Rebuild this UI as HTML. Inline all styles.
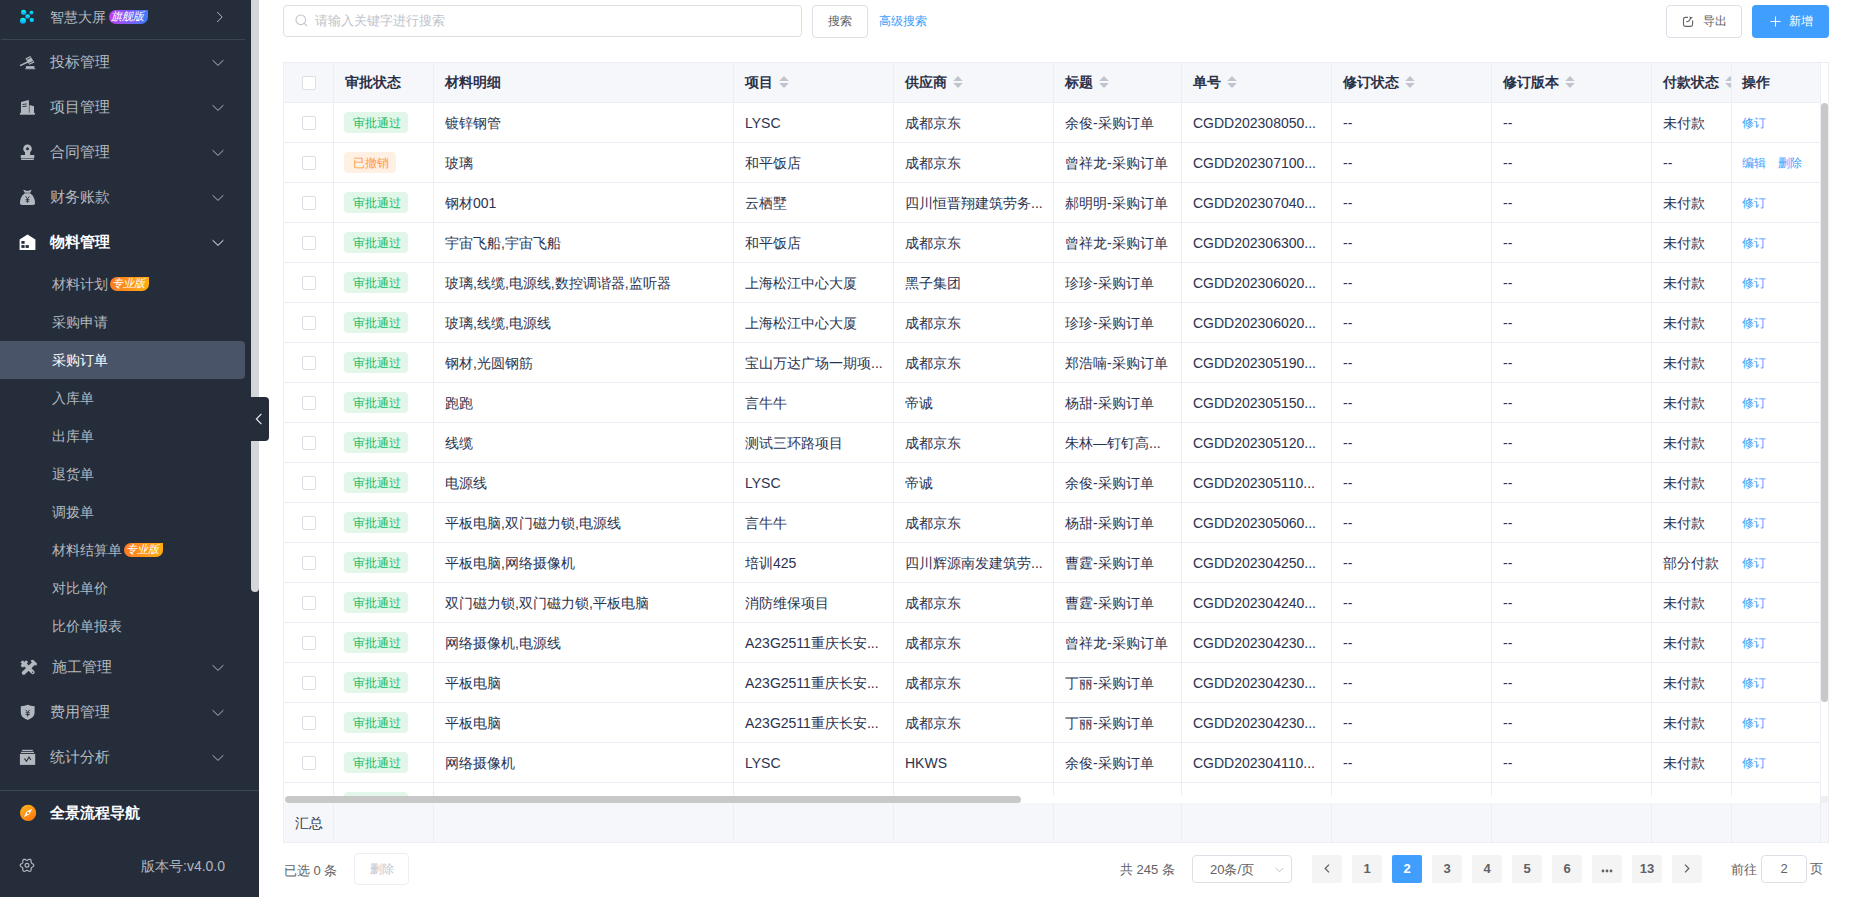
<!DOCTYPE html><html><head><meta charset="utf-8"><style>
*{box-sizing:border-box}
html,body{margin:0;padding:0}
body{width:1854px;height:897px;overflow:hidden;position:relative;background:#fff;font-family:"Liberation Sans",sans-serif;color:#2c3350;}
.abs{position:absolute}
.sb{position:absolute;left:0;top:0;width:259px;height:897px;background:#252d3b}
.thumb{position:absolute;left:251px;top:0;width:8px;height:592px;background:#d5d6d9;border-radius:0 0 4px 4px}
.mi{position:absolute;left:0;width:245px;height:38px;color:#b3b8bf;font-size:15px;line-height:38px;white-space:nowrap}
.mi .ic{position:absolute;left:19px;top:0;height:38px;display:flex;align-items:center}
.mi .tx{position:absolute;left:50px;top:0}
.mi .ar{position:absolute;left:212px;top:0;height:38px;display:flex;align-items:center;color:#b3b8bf}
.si{position:absolute;left:0;width:245px;height:38px;color:#b3b8bf;font-size:14px;line-height:38px;white-space:nowrap}
.si .tx{position:absolute;left:52px;top:0}
.si.sel{background:#4a5469;color:#fff;border-radius:0 4px 4px 0}
.badge{position:absolute;height:14px;font-size:11px;line-height:13px;color:#fff;font-style:italic;text-align:center;text-indent:-2px;letter-spacing:-0.3px;border-radius:7px 0 7px 7px;}
.b-pro{background:linear-gradient(90deg,#ff7a23,#ffae10)}
.b-flag{background:linear-gradient(90deg,#c03df2,#3d7bf7)}
.sep{position:absolute;left:1px;width:244px;height:1px;background:#3b4457}
.toggle{position:absolute;left:251px;top:397px;width:18px;height:44px;background:#252d3b;border-radius:0 4px 4px 0}
/* main */
.inp{position:absolute;left:283px;top:5px;width:519px;height:32px;border:1px solid #dcdfe6;border-radius:4px;background:#fff}
.btn{position:absolute;border:1px solid #dcdfe6;border-radius:4px;background:#fff;font-size:12px;color:#606266;text-align:center}
.tbl{position:absolute;left:283px;top:62px;width:1546px;height:781px;border:1px solid #ebeef5;overflow:hidden}
.cell{position:absolute;overflow:hidden;white-space:nowrap;font-size:14px;padding-left:12px}
.hd{position:absolute;background:#f5f7fa}
.vl{position:absolute;width:1px;background:#ebeef5}
.hl{position:absolute;height:1px;background:#ebeef5}
.cb{position:absolute;width:14px;height:14px;border:1px solid #dcdfe6;border-radius:2px;background:#fff}
.tag{position:absolute;height:21px;line-height:23px;font-size:12px;padding:0 7px 0 9px;border-radius:4px}
.tag.ok{background:#e3f6ea;color:#17bb62}
.tag.cancel{background:#fff0e4;color:#ff9a3f}
.lnk{position:absolute;font-size:12px;color:#409eff}
.caret{position:absolute;width:10px;height:12px}
.pg{position:absolute;top:855px;width:30px;height:28px;background:#f4f4f5;border-radius:2px;font-size:13px;font-weight:bold;color:#606266;text-align:center;line-height:28px}
.pg.on{background:#409eff;color:#fff}
</style></head><body>
<div class="sb">
<div class="mi" style="top:-2px"><span class="tx" style="font-size:14px">智慧大屏</span><span class="ar" style="left:214px"><svg style="margin-left:2px;margin-top:-1px" width="8" height="12" viewBox="0 0 8 12"><path d="M1.2 1 L6.2 6 L1.2 11" stroke="currentColor" stroke-width="1" fill="none"/></svg></span></div>
<div class="badge b-flag" style="left:109px;top:10px;width:39px">旗舰版</div>
<div class="sep" style="top:39px"></div>
<div class="mi" style="top:43px"><span class="tx">投标管理</span><span class="ar"><svg style="margin-top:2px" width="12" height="8" viewBox="0 0 12 8"><path d="M0.6 1.2 L6 6.4 L11.4 1.2" stroke="currentColor" stroke-width="1" fill="none"/></svg></span></div>
<div class="mi" style="top:88px"><span class="tx">项目管理</span><span class="ar"><svg style="margin-top:2px" width="12" height="8" viewBox="0 0 12 8"><path d="M0.6 1.2 L6 6.4 L11.4 1.2" stroke="currentColor" stroke-width="1" fill="none"/></svg></span></div>
<div class="mi" style="top:133px"><span class="tx">合同管理</span><span class="ar"><svg style="margin-top:2px" width="12" height="8" viewBox="0 0 12 8"><path d="M0.6 1.2 L6 6.4 L11.4 1.2" stroke="currentColor" stroke-width="1" fill="none"/></svg></span></div>
<div class="mi" style="top:178px"><span class="tx">财务账款</span><span class="ar"><svg style="margin-top:2px" width="12" height="8" viewBox="0 0 12 8"><path d="M0.6 1.2 L6 6.4 L11.4 1.2" stroke="currentColor" stroke-width="1" fill="none"/></svg></span></div>
<div class="mi" style="top:223px;color:#fff;font-weight:bold"><span class="tx">物料管理</span><span class="ar" style="color:#fff"><svg style="margin-top:2px" width="12" height="8" viewBox="0 0 12 8"><path d="M0.6 1.2 L6 6.4 L11.4 1.2" stroke="currentColor" stroke-width="1" fill="none"/></svg></span></div>
<div class="si" style="top:265px"><span class="tx">材料计划</span></div>
<div class="si" style="top:303px"><span class="tx">采购申请</span></div>
<div class="si sel" style="top:341px"><span class="tx">采购订单</span></div>
<div class="si" style="top:379px"><span class="tx">入库单</span></div>
<div class="si" style="top:417px"><span class="tx">出库单</span></div>
<div class="si" style="top:455px"><span class="tx">退货单</span></div>
<div class="si" style="top:493px"><span class="tx">调拨单</span></div>
<div class="si" style="top:531px"><span class="tx">材料结算单</span></div>
<div class="si" style="top:569px"><span class="tx">对比单价</span></div>
<div class="si" style="top:607px"><span class="tx">比价单报表</span></div>
<div class="badge b-pro" style="left:110px;top:277px;width:39px">专业版</div>
<div class="badge b-pro" style="left:124px;top:543px;width:39px">专业版</div>
<div class="mi" style="top:648px"><span class="tx" style="left:52px">施工管理</span><span class="ar"><svg style="margin-top:2px" width="12" height="8" viewBox="0 0 12 8"><path d="M0.6 1.2 L6 6.4 L11.4 1.2" stroke="currentColor" stroke-width="1" fill="none"/></svg></span></div>
<div class="mi" style="top:693px"><span class="tx" style="left:50px">费用管理</span><span class="ar"><svg style="margin-top:2px" width="12" height="8" viewBox="0 0 12 8"><path d="M0.6 1.2 L6 6.4 L11.4 1.2" stroke="currentColor" stroke-width="1" fill="none"/></svg></span></div>
<div class="mi" style="top:738px"><span class="tx" style="left:50px">统计分析</span><span class="ar"><svg style="margin-top:2px" width="12" height="8" viewBox="0 0 12 8"><path d="M0.6 1.2 L6 6.4 L11.4 1.2" stroke="currentColor" stroke-width="1" fill="none"/></svg></span></div>
<div class="sep" style="top:790px;left:0;width:259px"></div>
<div class="mi" style="top:794px;color:#fff;font-weight:bold"><span class="tx">全景流程导航</span></div>
<div class="abs" style="left:141px;top:857px;font-size:14px;color:#b3b8bf;line-height:18px">版本号:v4.0.0</div>
<svg class="abs" style="left:18px;top:4px" width="20" height="20" viewBox="0 0 20 20"><defs><linearGradient id="gs" x1="0" y1="0" x2="0" y2="1"><stop offset="0.2" stop-color="#05eef0"/><stop offset="1" stop-color="#0898ff"/></linearGradient></defs><g fill="url(#gs)"><circle cx="5.6" cy="8.3" r="2.6"/><circle cx="13.4" cy="8.7" r="1.9"/><circle cx="9.6" cy="12.5" r="2.3"/><circle cx="5" cy="16.8" r="3"/><circle cx="13.8" cy="16.1" r="2.2"/></g></svg>
<svg class="abs" style="left:18px;top:52px" width="20" height="20" viewBox="0 0 20 20"><g fill="#b3b8bf"><path d="M7.3 6.6 L12.3 4.1 L16.4 10.4 L11.3 12.7 Z"/><path d="M9.6 9.2 L10.6 10.6 L2.3 14.2 L1.6 13.1 Z"/><path d="M8 14.1 H16.4 V16.2 H8 Z"/><path d="M7.3 16.2 H17.2 V17.2 H7.3 Z"/></g><g stroke="#252d3b" stroke-width="0.8"><path d="M8.6 7.6 L12.6 5.6"/><path d="M10.8 11.4 L15 9.4"/></g></svg>
<svg class="abs" style="left:18px;top:98px" width="20" height="20" viewBox="0 0 20 20"><g fill="#b3b8bf"><path d="M3 3.9 L10.9 2.1 V14.9 H3 Z"/><path d="M11.5 7 L16 8.2 V14.9 H11.5 Z"/><rect x="1.9" y="14.8" width="15" height="1.9"/></g><g stroke="#252d3b" stroke-width="0.9"><path d="M4.3 6.5 L8.8 5.9"/><path d="M4.3 8.7 L8.8 8.1"/></g></svg>
<svg class="abs" style="left:18px;top:142px" width="20" height="20" viewBox="0 0 20 20"><g fill="#b3b8bf"><circle cx="9.5" cy="6.8" r="4.3"/><rect x="7" y="9.5" width="5.1" height="4"/><rect x="2.8" y="13" width="13.5" height="3"/><rect x="3.2" y="16.8" width="12.6" height="1.2"/><rect x="3" y="16" width="13" height="0.8" fill="#6e747c"/></g><circle cx="9.5" cy="6.7" r="1.5" fill="#252d3b"/></svg>
<svg class="abs" style="left:18px;top:186px" width="20" height="20" viewBox="0 0 20 20"><g fill="#b3b8bf"><path d="M5.1 3.7 L9.5 5 L13.7 3.7 L12.2 6.8 H6.8 Z"/><path d="M6.9 7.3 H12.1 C15.6 9.6 17.2 13.6 17 17.2 Q16.9 18.9 15.2 18.9 H3.8 Q2.1 18.9 2 17.2 C1.8 13.6 3.4 9.6 6.9 7.3Z"/></g><path d="M7.6 10.3 L9.5 12.8 L11.4 10.3 M9.5 12.8 V16.8 M7.7 13.6 H11.3 M7.7 15.2 H11.3" stroke="#252d3b" stroke-width="0.9" fill="none"/></svg>
<svg class="abs" style="left:18px;top:233px" width="20" height="20" viewBox="0 0 20 20"><path d="M1.6 6.6 L9.5 1.5 L17.4 6.6 V16.9 H1.6 Z" fill="#fff"/><g fill="#252d3b"><rect x="3.4" y="8" width="3.2" height="2.8"/><rect x="3.4" y="12.1" width="3.2" height="2.8"/><rect x="7.6" y="12.1" width="3.2" height="2.8"/></g></svg>
<svg class="abs" style="left:18px;top:656px" width="20" height="20" viewBox="0 0 20 20"><g fill="#b3b8bf"><path d="M2.4 6.6 L4.6 4.2 L6.4 6 L7.6 4.6 C8.6 4.4 9.6 5.2 10 6.2 L8.8 7.6 L16.2 15 Q17.2 16.4 16.2 17.6 Q15 18.8 13.6 17.8 L6.2 10.4 L4.8 11.6 C3.6 11.2 2.8 10.2 2.8 9 L4.2 7.8 Z"/><path d="M12.6 4.2 L15.2 3.8 L19 7.6 L18.4 9.8 L16.8 9 L7 18.2 Q5.6 19.4 4.2 18.2 Q3 16.8 4.4 15.6 L13.8 6.6 Z"/></g><circle cx="14.6" cy="16.3" r="0.7" fill="#252d3b"/></svg>
<svg class="abs" style="left:18px;top:701px" width="20" height="20" viewBox="0 0 20 20"><path d="M9.7 3.8 Q12.6 5.2 16.6 5.2 V11.6 Q16.6 16.8 9.7 19 Q2.8 16.8 2.8 11.6 V5.2 Q6.8 5.2 9.7 3.8Z" fill="#b3b8bf"/><path d="M7.6 8.8 L9.7 11.3 L11.8 8.8 M9.7 11.3 V15.6 M7.6 11.8 H11.8 M7.6 13.6 H11.8" stroke="#252d3b" stroke-width="0.9" fill="none"/></svg>
<svg class="abs" style="left:18px;top:746px" width="20" height="20" viewBox="0 0 20 20"><g fill="#b3b8bf"><rect x="4.1" y="3.8" width="10.7" height="1.2"/><rect x="3" y="5.8" width="13" height="1.2"/><rect x="1.9" y="7.9" width="15.3" height="11"/></g><path d="M6.3 12.5 L8.5 15.2 L11 11 L12.8 14" stroke="#252d3b" stroke-width="1.1" fill="none"/></svg>
<svg class="abs" style="left:18px;top:803px" width="20" height="20" viewBox="0 0 20 20"><defs><linearGradient id="gc" x1="0.2" y1="0" x2="0.8" y2="1"><stop offset="0" stop-color="#ffb21e"/><stop offset="1" stop-color="#ff760a"/></linearGradient></defs><circle cx="10.1" cy="9.9" r="8.1" fill="url(#gc)"/><path d="M5.9 13.9 L8.6 8.4 L14.2 5.7 L11.5 11.3 Z" fill="#fff"/><rect x="9.1" y="8.9" width="2" height="2" fill="#ff8a10"/></svg>
<svg class="abs" style="left:18px;top:855px" width="20" height="20" viewBox="0 0 20 20"><path d="M15.80 10.30 L15.65 10.88 L15.25 11.40 L14.70 11.83 L14.12 12.16 L13.64 12.46 L13.33 12.80 L13.19 13.24 L13.17 13.80 L13.17 14.47 L13.08 15.16 L12.83 15.77 L12.40 16.19 L11.82 16.35 L11.17 16.27 L10.53 16.00 L9.95 15.67 L9.45 15.40 L9.00 15.30 L8.55 15.40 L8.05 15.67 L7.47 16.00 L6.83 16.27 L6.18 16.35 L5.60 16.19 L5.17 15.77 L4.92 15.16 L4.83 14.47 L4.83 13.80 L4.81 13.24 L4.67 12.80 L4.36 12.46 L3.88 12.16 L3.30 11.83 L2.75 11.40 L2.35 10.88 L2.20 10.30 L2.35 9.72 L2.75 9.20 L3.30 8.77 L3.88 8.44 L4.36 8.14 L4.67 7.80 L4.81 7.36 L4.83 6.80 L4.83 6.13 L4.92 5.44 L5.17 4.83 L5.60 4.41 L6.18 4.25 L6.83 4.33 L7.47 4.60 L8.05 4.93 L8.55 5.20 L9.00 5.30 L9.45 5.20 L9.95 4.93 L10.53 4.60 L11.17 4.33 L11.82 4.25 L12.40 4.41 L12.83 4.83 L13.08 5.44 L13.17 6.13 L13.17 6.80 L13.19 7.36 L13.33 7.80 L13.64 8.14 L14.12 8.44 L14.70 8.77 L15.25 9.20 L15.65 9.72 L15.80 10.30Z" fill="none" stroke="#b3b8bf" stroke-width="1.2" stroke-linejoin="round"/><circle cx="9" cy="10.3" r="1.9" fill="none" stroke="#b3b8bf" stroke-width="1.2"/></svg>
</div>
<div class="thumb"></div>
<div class="toggle"><svg class="abs" style="left:4px;top:16px" width="8" height="12" viewBox="0 0 8 12"><path d="M6.4 0.8 L1.4 6 L6.4 11.2" stroke="#e8eaee" stroke-width="1.2" fill="none"/></svg></div>
<div class="inp"><svg class="abs" style="left:11px;top:8px" width="13" height="13" viewBox="0 0 13 13"><circle cx="5.8" cy="5.8" r="4.8" stroke="#c0c4cc" stroke-width="1.1" fill="none"/><path d="M9.3 9.3 L12 12" stroke="#c0c4cc" stroke-width="1.1"/></svg><span class="abs" style="left:31px;top:7px;font-size:13px;line-height:16px;color:#c0c4cc">请输入关键字进行搜索</span></div>
<div class="btn" style="left:812px;top:5px;width:56px;height:33px;line-height:31px">搜索</div>
<div class="abs" style="left:879px;top:13px;font-size:12px;line-height:16px;color:#409eff">高级搜索</div>
<div class="btn" style="left:1666px;top:5px;width:76px;height:33px;line-height:31px"><svg class="abs" style="left:15px;top:9px" width="13" height="13" viewBox="0 0 13 13"><path d="M5.9 2.4 H3.4 Q1.5 2.4 1.5 4.3 V9.5 Q1.5 11.4 3.4 11.4 H8.7 Q10.6 11.4 10.6 9.5 V5.4" stroke="#606266" stroke-width="1.1" fill="none"/><path d="M4.4 6.6 Q7.6 6.6 8.6 2.8" stroke="#606266" stroke-width="1.1" fill="none"/><path d="M7.4 1.4 L10.9 2.5 L8.2 4.4 Z" fill="#606266"/></svg><span class="abs" style="left:36px;top:0">导出</span></div>
<div class="abs" style="left:1752px;top:5px;width:77px;height:33px;background:#409eff;border-radius:4px;color:#fff;font-size:12px;line-height:33px"><svg class="abs" style="left:18px;top:11px" width="11" height="11" viewBox="0 0 11 11"><path d="M5.5 0.5 V10.5 M0.5 5.5 H10.5" stroke="#fff" stroke-width="1.1"/></svg><span class="abs" style="left:37px;top:0">新增</span></div>
<div class="tbl">
<div class="hd" style="left:0;top:0;width:1537px;height:39px"></div>
<div class="hl" style="left:0;top:39px;width:1537px"></div>
<div class="cb" style="left:18px;top:13px"></div>
<div class="cell" style="left:50px;top:0;width:99px;height:39px;line-height:39px;font-size:14px;padding-left:11px"><span style="font-weight:bold;color:#2c3148">审批状态</span></div>
<div class="cell" style="left:150px;top:0;width:299px;height:39px;line-height:39px;font-size:14px;padding-left:11px"><span style="font-weight:bold;color:#2c3148">材料明细</span></div>
<div class="cell" style="left:450px;top:0;width:159px;height:39px;line-height:39px;font-size:14px;padding-left:11px"><span style="font-weight:bold;color:#2c3148">项目</span></div>
<div class="cell" style="left:610px;top:0;width:159px;height:39px;line-height:39px;font-size:14px;padding-left:11px"><span style="font-weight:bold;color:#2c3148">供应商</span></div>
<div class="cell" style="left:770px;top:0;width:127px;height:39px;line-height:39px;font-size:14px;padding-left:11px"><span style="font-weight:bold;color:#2c3148">标题</span></div>
<div class="cell" style="left:898px;top:0;width:149px;height:39px;line-height:39px;font-size:14px;padding-left:11px"><span style="font-weight:bold;color:#2c3148">单号</span></div>
<div class="cell" style="left:1048px;top:0;width:159px;height:39px;line-height:39px;font-size:14px;padding-left:11px"><span style="font-weight:bold;color:#2c3148">修订状态</span></div>
<div class="cell" style="left:1208px;top:0;width:159px;height:39px;line-height:39px;font-size:14px;padding-left:11px"><span style="font-weight:bold;color:#2c3148">修订版本</span></div>
<div class="cell" style="left:1368px;top:0;width:79px;height:39px;line-height:39px;font-size:14px;padding-left:11px"><span style="font-weight:bold;color:#2c3148">付款状态</span></div>
<div class="cell" style="left:1448px;top:0;width:88px;height:39px;line-height:39px;font-size:14px;padding-left:10px"><span style="font-weight:bold;color:#2c3148">操作</span></div>
<div class="caret" style="left:495px;top:13px;overflow:hidden;width:10px"><svg style="display:block" width="10" height="12" viewBox="0 0 10 12"><path d="M5 0 L9.8 5 H0.2 Z" fill="#c0c4cc"/><path d="M5 12 L9.8 7 H0.2 Z" fill="#c0c4cc"/></svg></div>
<div class="caret" style="left:669px;top:13px;overflow:hidden;width:10px"><svg style="display:block" width="10" height="12" viewBox="0 0 10 12"><path d="M5 0 L9.8 5 H0.2 Z" fill="#c0c4cc"/><path d="M5 12 L9.8 7 H0.2 Z" fill="#c0c4cc"/></svg></div>
<div class="caret" style="left:815px;top:13px;overflow:hidden;width:10px"><svg style="display:block" width="10" height="12" viewBox="0 0 10 12"><path d="M5 0 L9.8 5 H0.2 Z" fill="#c0c4cc"/><path d="M5 12 L9.8 7 H0.2 Z" fill="#c0c4cc"/></svg></div>
<div class="caret" style="left:943px;top:13px;overflow:hidden;width:10px"><svg style="display:block" width="10" height="12" viewBox="0 0 10 12"><path d="M5 0 L9.8 5 H0.2 Z" fill="#c0c4cc"/><path d="M5 12 L9.8 7 H0.2 Z" fill="#c0c4cc"/></svg></div>
<div class="caret" style="left:1121px;top:13px;overflow:hidden;width:10px"><svg style="display:block" width="10" height="12" viewBox="0 0 10 12"><path d="M5 0 L9.8 5 H0.2 Z" fill="#c0c4cc"/><path d="M5 12 L9.8 7 H0.2 Z" fill="#c0c4cc"/></svg></div>
<div class="caret" style="left:1281px;top:13px;overflow:hidden;width:10px"><svg style="display:block" width="10" height="12" viewBox="0 0 10 12"><path d="M5 0 L9.8 5 H0.2 Z" fill="#c0c4cc"/><path d="M5 12 L9.8 7 H0.2 Z" fill="#c0c4cc"/></svg></div>
<div class="caret" style="left:1441px;top:13px;overflow:hidden;width:6px"><svg style="display:block" width="10" height="12" viewBox="0 0 10 12"><path d="M5 0 L9.8 5 H0.2 Z" fill="#c0c4cc"/><path d="M5 12 L9.8 7 H0.2 Z" fill="#c0c4cc"/></svg></div>
<div class="cb" style="left:18px;top:53px"></div>
<div class="tag ok" style="left:60px;top:49px">审批通过</div>
<div class="cell" style="left:150px;top:40px;width:299px;height:39px;line-height:41px;padding-left:11px">镀锌钢管</div>
<div class="cell" style="left:450px;top:40px;width:159px;height:39px;line-height:41px;padding-left:11px">LYSC</div>
<div class="cell" style="left:610px;top:40px;width:159px;height:39px;line-height:41px;padding-left:11px">成都京东</div>
<div class="cell" style="left:770px;top:40px;width:127px;height:39px;line-height:41px;padding-left:11px">余俊-采购订单</div>
<div class="cell" style="left:898px;top:40px;width:149px;height:39px;line-height:41px;padding-left:11px">CGDD202308050...</div>
<div class="cell" style="left:1048px;top:40px;width:159px;height:39px;line-height:41px;padding-left:11px">--</div>
<div class="cell" style="left:1208px;top:40px;width:159px;height:39px;line-height:41px;padding-left:11px">--</div>
<div class="cell" style="left:1368px;top:40px;width:79px;height:39px;line-height:41px;padding-left:11px">未付款</div>
<div class="lnk" style="left:1458px;top:52px;line-height:16px">修订</div>
<div class="hl" style="left:0;top:79px;width:1537px"></div>
<div class="cb" style="left:18px;top:93px"></div>
<div class="tag cancel" style="left:60px;top:89px">已撤销</div>
<div class="cell" style="left:150px;top:80px;width:299px;height:39px;line-height:41px;padding-left:11px">玻璃</div>
<div class="cell" style="left:450px;top:80px;width:159px;height:39px;line-height:41px;padding-left:11px">和平饭店</div>
<div class="cell" style="left:610px;top:80px;width:159px;height:39px;line-height:41px;padding-left:11px">成都京东</div>
<div class="cell" style="left:770px;top:80px;width:127px;height:39px;line-height:41px;padding-left:11px">曾祥龙-采购订单</div>
<div class="cell" style="left:898px;top:80px;width:149px;height:39px;line-height:41px;padding-left:11px">CGDD202307100...</div>
<div class="cell" style="left:1048px;top:80px;width:159px;height:39px;line-height:41px;padding-left:11px">--</div>
<div class="cell" style="left:1208px;top:80px;width:159px;height:39px;line-height:41px;padding-left:11px">--</div>
<div class="cell" style="left:1368px;top:80px;width:79px;height:39px;line-height:41px;padding-left:11px">--</div>
<div class="lnk" style="left:1458px;top:92px;line-height:16px">编辑</div>
<div class="lnk" style="left:1494px;top:92px;line-height:16px">删除</div>
<div class="hl" style="left:0;top:119px;width:1537px"></div>
<div class="cb" style="left:18px;top:133px"></div>
<div class="tag ok" style="left:60px;top:129px">审批通过</div>
<div class="cell" style="left:150px;top:120px;width:299px;height:39px;line-height:41px;padding-left:11px">钢材001</div>
<div class="cell" style="left:450px;top:120px;width:159px;height:39px;line-height:41px;padding-left:11px">云栖墅</div>
<div class="cell" style="left:610px;top:120px;width:159px;height:39px;line-height:41px;padding-left:11px">四川恒晋翔建筑劳务...</div>
<div class="cell" style="left:770px;top:120px;width:127px;height:39px;line-height:41px;padding-left:11px">郝明明-采购订单</div>
<div class="cell" style="left:898px;top:120px;width:149px;height:39px;line-height:41px;padding-left:11px">CGDD202307040...</div>
<div class="cell" style="left:1048px;top:120px;width:159px;height:39px;line-height:41px;padding-left:11px">--</div>
<div class="cell" style="left:1208px;top:120px;width:159px;height:39px;line-height:41px;padding-left:11px">--</div>
<div class="cell" style="left:1368px;top:120px;width:79px;height:39px;line-height:41px;padding-left:11px">未付款</div>
<div class="lnk" style="left:1458px;top:132px;line-height:16px">修订</div>
<div class="hl" style="left:0;top:159px;width:1537px"></div>
<div class="cb" style="left:18px;top:173px"></div>
<div class="tag ok" style="left:60px;top:169px">审批通过</div>
<div class="cell" style="left:150px;top:160px;width:299px;height:39px;line-height:41px;padding-left:11px">宇宙飞船,宇宙飞船</div>
<div class="cell" style="left:450px;top:160px;width:159px;height:39px;line-height:41px;padding-left:11px">和平饭店</div>
<div class="cell" style="left:610px;top:160px;width:159px;height:39px;line-height:41px;padding-left:11px">成都京东</div>
<div class="cell" style="left:770px;top:160px;width:127px;height:39px;line-height:41px;padding-left:11px">曾祥龙-采购订单</div>
<div class="cell" style="left:898px;top:160px;width:149px;height:39px;line-height:41px;padding-left:11px">CGDD202306300...</div>
<div class="cell" style="left:1048px;top:160px;width:159px;height:39px;line-height:41px;padding-left:11px">--</div>
<div class="cell" style="left:1208px;top:160px;width:159px;height:39px;line-height:41px;padding-left:11px">--</div>
<div class="cell" style="left:1368px;top:160px;width:79px;height:39px;line-height:41px;padding-left:11px">未付款</div>
<div class="lnk" style="left:1458px;top:172px;line-height:16px">修订</div>
<div class="hl" style="left:0;top:199px;width:1537px"></div>
<div class="cb" style="left:18px;top:213px"></div>
<div class="tag ok" style="left:60px;top:209px">审批通过</div>
<div class="cell" style="left:150px;top:200px;width:299px;height:39px;line-height:41px;padding-left:11px">玻璃,线缆,电源线,数控调谐器,监听器</div>
<div class="cell" style="left:450px;top:200px;width:159px;height:39px;line-height:41px;padding-left:11px">上海松江中心大厦</div>
<div class="cell" style="left:610px;top:200px;width:159px;height:39px;line-height:41px;padding-left:11px">黑子集团</div>
<div class="cell" style="left:770px;top:200px;width:127px;height:39px;line-height:41px;padding-left:11px">珍珍-采购订单</div>
<div class="cell" style="left:898px;top:200px;width:149px;height:39px;line-height:41px;padding-left:11px">CGDD202306020...</div>
<div class="cell" style="left:1048px;top:200px;width:159px;height:39px;line-height:41px;padding-left:11px">--</div>
<div class="cell" style="left:1208px;top:200px;width:159px;height:39px;line-height:41px;padding-left:11px">--</div>
<div class="cell" style="left:1368px;top:200px;width:79px;height:39px;line-height:41px;padding-left:11px">未付款</div>
<div class="lnk" style="left:1458px;top:212px;line-height:16px">修订</div>
<div class="hl" style="left:0;top:239px;width:1537px"></div>
<div class="cb" style="left:18px;top:253px"></div>
<div class="tag ok" style="left:60px;top:249px">审批通过</div>
<div class="cell" style="left:150px;top:240px;width:299px;height:39px;line-height:41px;padding-left:11px">玻璃,线缆,电源线</div>
<div class="cell" style="left:450px;top:240px;width:159px;height:39px;line-height:41px;padding-left:11px">上海松江中心大厦</div>
<div class="cell" style="left:610px;top:240px;width:159px;height:39px;line-height:41px;padding-left:11px">成都京东</div>
<div class="cell" style="left:770px;top:240px;width:127px;height:39px;line-height:41px;padding-left:11px">珍珍-采购订单</div>
<div class="cell" style="left:898px;top:240px;width:149px;height:39px;line-height:41px;padding-left:11px">CGDD202306020...</div>
<div class="cell" style="left:1048px;top:240px;width:159px;height:39px;line-height:41px;padding-left:11px">--</div>
<div class="cell" style="left:1208px;top:240px;width:159px;height:39px;line-height:41px;padding-left:11px">--</div>
<div class="cell" style="left:1368px;top:240px;width:79px;height:39px;line-height:41px;padding-left:11px">未付款</div>
<div class="lnk" style="left:1458px;top:252px;line-height:16px">修订</div>
<div class="hl" style="left:0;top:279px;width:1537px"></div>
<div class="cb" style="left:18px;top:293px"></div>
<div class="tag ok" style="left:60px;top:289px">审批通过</div>
<div class="cell" style="left:150px;top:280px;width:299px;height:39px;line-height:41px;padding-left:11px">钢材,光圆钢筋</div>
<div class="cell" style="left:450px;top:280px;width:159px;height:39px;line-height:41px;padding-left:11px">宝山万达广场一期项...</div>
<div class="cell" style="left:610px;top:280px;width:159px;height:39px;line-height:41px;padding-left:11px">成都京东</div>
<div class="cell" style="left:770px;top:280px;width:127px;height:39px;line-height:41px;padding-left:11px">郑浩喃-采购订单</div>
<div class="cell" style="left:898px;top:280px;width:149px;height:39px;line-height:41px;padding-left:11px">CGDD202305190...</div>
<div class="cell" style="left:1048px;top:280px;width:159px;height:39px;line-height:41px;padding-left:11px">--</div>
<div class="cell" style="left:1208px;top:280px;width:159px;height:39px;line-height:41px;padding-left:11px">--</div>
<div class="cell" style="left:1368px;top:280px;width:79px;height:39px;line-height:41px;padding-left:11px">未付款</div>
<div class="lnk" style="left:1458px;top:292px;line-height:16px">修订</div>
<div class="hl" style="left:0;top:319px;width:1537px"></div>
<div class="cb" style="left:18px;top:333px"></div>
<div class="tag ok" style="left:60px;top:329px">审批通过</div>
<div class="cell" style="left:150px;top:320px;width:299px;height:39px;line-height:41px;padding-left:11px">跑跑</div>
<div class="cell" style="left:450px;top:320px;width:159px;height:39px;line-height:41px;padding-left:11px">言牛牛</div>
<div class="cell" style="left:610px;top:320px;width:159px;height:39px;line-height:41px;padding-left:11px">帝诚</div>
<div class="cell" style="left:770px;top:320px;width:127px;height:39px;line-height:41px;padding-left:11px">杨甜-采购订单</div>
<div class="cell" style="left:898px;top:320px;width:149px;height:39px;line-height:41px;padding-left:11px">CGDD202305150...</div>
<div class="cell" style="left:1048px;top:320px;width:159px;height:39px;line-height:41px;padding-left:11px">--</div>
<div class="cell" style="left:1208px;top:320px;width:159px;height:39px;line-height:41px;padding-left:11px">--</div>
<div class="cell" style="left:1368px;top:320px;width:79px;height:39px;line-height:41px;padding-left:11px">未付款</div>
<div class="lnk" style="left:1458px;top:332px;line-height:16px">修订</div>
<div class="hl" style="left:0;top:359px;width:1537px"></div>
<div class="cb" style="left:18px;top:373px"></div>
<div class="tag ok" style="left:60px;top:369px">审批通过</div>
<div class="cell" style="left:150px;top:360px;width:299px;height:39px;line-height:41px;padding-left:11px">线缆</div>
<div class="cell" style="left:450px;top:360px;width:159px;height:39px;line-height:41px;padding-left:11px">测试三环路项目</div>
<div class="cell" style="left:610px;top:360px;width:159px;height:39px;line-height:41px;padding-left:11px">成都京东</div>
<div class="cell" style="left:770px;top:360px;width:127px;height:39px;line-height:41px;padding-left:11px">朱林—钉钉高...</div>
<div class="cell" style="left:898px;top:360px;width:149px;height:39px;line-height:41px;padding-left:11px">CGDD202305120...</div>
<div class="cell" style="left:1048px;top:360px;width:159px;height:39px;line-height:41px;padding-left:11px">--</div>
<div class="cell" style="left:1208px;top:360px;width:159px;height:39px;line-height:41px;padding-left:11px">--</div>
<div class="cell" style="left:1368px;top:360px;width:79px;height:39px;line-height:41px;padding-left:11px">未付款</div>
<div class="lnk" style="left:1458px;top:372px;line-height:16px">修订</div>
<div class="hl" style="left:0;top:399px;width:1537px"></div>
<div class="cb" style="left:18px;top:413px"></div>
<div class="tag ok" style="left:60px;top:409px">审批通过</div>
<div class="cell" style="left:150px;top:400px;width:299px;height:39px;line-height:41px;padding-left:11px">电源线</div>
<div class="cell" style="left:450px;top:400px;width:159px;height:39px;line-height:41px;padding-left:11px">LYSC</div>
<div class="cell" style="left:610px;top:400px;width:159px;height:39px;line-height:41px;padding-left:11px">帝诚</div>
<div class="cell" style="left:770px;top:400px;width:127px;height:39px;line-height:41px;padding-left:11px">余俊-采购订单</div>
<div class="cell" style="left:898px;top:400px;width:149px;height:39px;line-height:41px;padding-left:11px">CGDD202305110...</div>
<div class="cell" style="left:1048px;top:400px;width:159px;height:39px;line-height:41px;padding-left:11px">--</div>
<div class="cell" style="left:1208px;top:400px;width:159px;height:39px;line-height:41px;padding-left:11px">--</div>
<div class="cell" style="left:1368px;top:400px;width:79px;height:39px;line-height:41px;padding-left:11px">未付款</div>
<div class="lnk" style="left:1458px;top:412px;line-height:16px">修订</div>
<div class="hl" style="left:0;top:439px;width:1537px"></div>
<div class="cb" style="left:18px;top:453px"></div>
<div class="tag ok" style="left:60px;top:449px">审批通过</div>
<div class="cell" style="left:150px;top:440px;width:299px;height:39px;line-height:41px;padding-left:11px">平板电脑,双门磁力锁,电源线</div>
<div class="cell" style="left:450px;top:440px;width:159px;height:39px;line-height:41px;padding-left:11px">言牛牛</div>
<div class="cell" style="left:610px;top:440px;width:159px;height:39px;line-height:41px;padding-left:11px">成都京东</div>
<div class="cell" style="left:770px;top:440px;width:127px;height:39px;line-height:41px;padding-left:11px">杨甜-采购订单</div>
<div class="cell" style="left:898px;top:440px;width:149px;height:39px;line-height:41px;padding-left:11px">CGDD202305060...</div>
<div class="cell" style="left:1048px;top:440px;width:159px;height:39px;line-height:41px;padding-left:11px">--</div>
<div class="cell" style="left:1208px;top:440px;width:159px;height:39px;line-height:41px;padding-left:11px">--</div>
<div class="cell" style="left:1368px;top:440px;width:79px;height:39px;line-height:41px;padding-left:11px">未付款</div>
<div class="lnk" style="left:1458px;top:452px;line-height:16px">修订</div>
<div class="hl" style="left:0;top:479px;width:1537px"></div>
<div class="cb" style="left:18px;top:493px"></div>
<div class="tag ok" style="left:60px;top:489px">审批通过</div>
<div class="cell" style="left:150px;top:480px;width:299px;height:39px;line-height:41px;padding-left:11px">平板电脑,网络摄像机</div>
<div class="cell" style="left:450px;top:480px;width:159px;height:39px;line-height:41px;padding-left:11px">培训425</div>
<div class="cell" style="left:610px;top:480px;width:159px;height:39px;line-height:41px;padding-left:11px">四川辉源南发建筑劳...</div>
<div class="cell" style="left:770px;top:480px;width:127px;height:39px;line-height:41px;padding-left:11px">曹霆-采购订单</div>
<div class="cell" style="left:898px;top:480px;width:149px;height:39px;line-height:41px;padding-left:11px">CGDD202304250...</div>
<div class="cell" style="left:1048px;top:480px;width:159px;height:39px;line-height:41px;padding-left:11px">--</div>
<div class="cell" style="left:1208px;top:480px;width:159px;height:39px;line-height:41px;padding-left:11px">--</div>
<div class="cell" style="left:1368px;top:480px;width:79px;height:39px;line-height:41px;padding-left:11px">部分付款</div>
<div class="lnk" style="left:1458px;top:492px;line-height:16px">修订</div>
<div class="hl" style="left:0;top:519px;width:1537px"></div>
<div class="cb" style="left:18px;top:533px"></div>
<div class="tag ok" style="left:60px;top:529px">审批通过</div>
<div class="cell" style="left:150px;top:520px;width:299px;height:39px;line-height:41px;padding-left:11px">双门磁力锁,双门磁力锁,平板电脑</div>
<div class="cell" style="left:450px;top:520px;width:159px;height:39px;line-height:41px;padding-left:11px">消防维保项目</div>
<div class="cell" style="left:610px;top:520px;width:159px;height:39px;line-height:41px;padding-left:11px">成都京东</div>
<div class="cell" style="left:770px;top:520px;width:127px;height:39px;line-height:41px;padding-left:11px">曹霆-采购订单</div>
<div class="cell" style="left:898px;top:520px;width:149px;height:39px;line-height:41px;padding-left:11px">CGDD202304240...</div>
<div class="cell" style="left:1048px;top:520px;width:159px;height:39px;line-height:41px;padding-left:11px">--</div>
<div class="cell" style="left:1208px;top:520px;width:159px;height:39px;line-height:41px;padding-left:11px">--</div>
<div class="cell" style="left:1368px;top:520px;width:79px;height:39px;line-height:41px;padding-left:11px">未付款</div>
<div class="lnk" style="left:1458px;top:532px;line-height:16px">修订</div>
<div class="hl" style="left:0;top:559px;width:1537px"></div>
<div class="cb" style="left:18px;top:573px"></div>
<div class="tag ok" style="left:60px;top:569px">审批通过</div>
<div class="cell" style="left:150px;top:560px;width:299px;height:39px;line-height:41px;padding-left:11px">网络摄像机,电源线</div>
<div class="cell" style="left:450px;top:560px;width:159px;height:39px;line-height:41px;padding-left:11px">A23G2511重庆长安...</div>
<div class="cell" style="left:610px;top:560px;width:159px;height:39px;line-height:41px;padding-left:11px">成都京东</div>
<div class="cell" style="left:770px;top:560px;width:127px;height:39px;line-height:41px;padding-left:11px">曾祥龙-采购订单</div>
<div class="cell" style="left:898px;top:560px;width:149px;height:39px;line-height:41px;padding-left:11px">CGDD202304230...</div>
<div class="cell" style="left:1048px;top:560px;width:159px;height:39px;line-height:41px;padding-left:11px">--</div>
<div class="cell" style="left:1208px;top:560px;width:159px;height:39px;line-height:41px;padding-left:11px">--</div>
<div class="cell" style="left:1368px;top:560px;width:79px;height:39px;line-height:41px;padding-left:11px">未付款</div>
<div class="lnk" style="left:1458px;top:572px;line-height:16px">修订</div>
<div class="hl" style="left:0;top:599px;width:1537px"></div>
<div class="cb" style="left:18px;top:613px"></div>
<div class="tag ok" style="left:60px;top:609px">审批通过</div>
<div class="cell" style="left:150px;top:600px;width:299px;height:39px;line-height:41px;padding-left:11px">平板电脑</div>
<div class="cell" style="left:450px;top:600px;width:159px;height:39px;line-height:41px;padding-left:11px">A23G2511重庆长安...</div>
<div class="cell" style="left:610px;top:600px;width:159px;height:39px;line-height:41px;padding-left:11px">成都京东</div>
<div class="cell" style="left:770px;top:600px;width:127px;height:39px;line-height:41px;padding-left:11px">丁丽-采购订单</div>
<div class="cell" style="left:898px;top:600px;width:149px;height:39px;line-height:41px;padding-left:11px">CGDD202304230...</div>
<div class="cell" style="left:1048px;top:600px;width:159px;height:39px;line-height:41px;padding-left:11px">--</div>
<div class="cell" style="left:1208px;top:600px;width:159px;height:39px;line-height:41px;padding-left:11px">--</div>
<div class="cell" style="left:1368px;top:600px;width:79px;height:39px;line-height:41px;padding-left:11px">未付款</div>
<div class="lnk" style="left:1458px;top:612px;line-height:16px">修订</div>
<div class="hl" style="left:0;top:639px;width:1537px"></div>
<div class="cb" style="left:18px;top:653px"></div>
<div class="tag ok" style="left:60px;top:649px">审批通过</div>
<div class="cell" style="left:150px;top:640px;width:299px;height:39px;line-height:41px;padding-left:11px">平板电脑</div>
<div class="cell" style="left:450px;top:640px;width:159px;height:39px;line-height:41px;padding-left:11px">A23G2511重庆长安...</div>
<div class="cell" style="left:610px;top:640px;width:159px;height:39px;line-height:41px;padding-left:11px">成都京东</div>
<div class="cell" style="left:770px;top:640px;width:127px;height:39px;line-height:41px;padding-left:11px">丁丽-采购订单</div>
<div class="cell" style="left:898px;top:640px;width:149px;height:39px;line-height:41px;padding-left:11px">CGDD202304230...</div>
<div class="cell" style="left:1048px;top:640px;width:159px;height:39px;line-height:41px;padding-left:11px">--</div>
<div class="cell" style="left:1208px;top:640px;width:159px;height:39px;line-height:41px;padding-left:11px">--</div>
<div class="cell" style="left:1368px;top:640px;width:79px;height:39px;line-height:41px;padding-left:11px">未付款</div>
<div class="lnk" style="left:1458px;top:652px;line-height:16px">修订</div>
<div class="hl" style="left:0;top:679px;width:1537px"></div>
<div class="cb" style="left:18px;top:693px"></div>
<div class="tag ok" style="left:60px;top:689px">审批通过</div>
<div class="cell" style="left:150px;top:680px;width:299px;height:39px;line-height:41px;padding-left:11px">网络摄像机</div>
<div class="cell" style="left:450px;top:680px;width:159px;height:39px;line-height:41px;padding-left:11px">LYSC</div>
<div class="cell" style="left:610px;top:680px;width:159px;height:39px;line-height:41px;padding-left:11px">HKWS</div>
<div class="cell" style="left:770px;top:680px;width:127px;height:39px;line-height:41px;padding-left:11px">余俊-采购订单</div>
<div class="cell" style="left:898px;top:680px;width:149px;height:39px;line-height:41px;padding-left:11px">CGDD202304110...</div>
<div class="cell" style="left:1048px;top:680px;width:159px;height:39px;line-height:41px;padding-left:11px">--</div>
<div class="cell" style="left:1208px;top:680px;width:159px;height:39px;line-height:41px;padding-left:11px">--</div>
<div class="cell" style="left:1368px;top:680px;width:79px;height:39px;line-height:41px;padding-left:11px">未付款</div>
<div class="lnk" style="left:1458px;top:692px;line-height:16px">修订</div>
<div class="hl" style="left:0;top:719px;width:1537px"></div>
<div class="cb" style="left:18px;top:733px"></div>
<div class="tag ok" style="left:60px;top:729px">审批通过</div>
<div class="cell" style="left:150px;top:720px;width:299px;height:39px;line-height:41px;padding-left:11px"></div>
<div class="cell" style="left:450px;top:720px;width:159px;height:39px;line-height:41px;padding-left:11px"></div>
<div class="cell" style="left:610px;top:720px;width:159px;height:39px;line-height:41px;padding-left:11px"></div>
<div class="cell" style="left:770px;top:720px;width:127px;height:39px;line-height:41px;padding-left:11px"></div>
<div class="cell" style="left:898px;top:720px;width:149px;height:39px;line-height:41px;padding-left:11px"></div>
<div class="cell" style="left:1048px;top:720px;width:159px;height:39px;line-height:41px;padding-left:11px"></div>
<div class="cell" style="left:1208px;top:720px;width:159px;height:39px;line-height:41px;padding-left:11px"></div>
<div class="cell" style="left:1368px;top:720px;width:79px;height:39px;line-height:41px;padding-left:11px"></div>
<div class="hl" style="left:0;top:759px;width:1537px"></div>
<div class="vl" style="left:49px;top:0;height:780px"></div>
<div class="vl" style="left:149px;top:0;height:780px"></div>
<div class="vl" style="left:449px;top:0;height:780px"></div>
<div class="vl" style="left:609px;top:0;height:780px"></div>
<div class="vl" style="left:769px;top:0;height:780px"></div>
<div class="vl" style="left:897px;top:0;height:780px"></div>
<div class="vl" style="left:1047px;top:0;height:780px"></div>
<div class="vl" style="left:1207px;top:0;height:780px"></div>
<div class="vl" style="left:1367px;top:0;height:780px"></div>
<div class="vl" style="left:1447px;top:0;height:780px"></div>
<div class="vl" style="left:1536px;top:0;height:780px"></div>
<div class="abs" style="left:0;top:740px;width:1544px;height:39px;background:#f5f7fa"></div>
<div class="vl" style="left:49px;top:740px;height:39px"></div>
<div class="vl" style="left:149px;top:740px;height:39px"></div>
<div class="vl" style="left:449px;top:740px;height:39px"></div>
<div class="vl" style="left:609px;top:740px;height:39px"></div>
<div class="vl" style="left:769px;top:740px;height:39px"></div>
<div class="vl" style="left:897px;top:740px;height:39px"></div>
<div class="vl" style="left:1047px;top:740px;height:39px"></div>
<div class="vl" style="left:1207px;top:740px;height:39px"></div>
<div class="vl" style="left:1367px;top:740px;height:39px"></div>
<div class="vl" style="left:1447px;top:740px;height:39px"></div>
<div class="vl" style="left:1536px;top:740px;height:39px"></div>
<div class="abs" style="left:11px;top:740px;line-height:41px;font-size:14px;color:#2c3350">汇总</div>
<div class="abs" style="left:0;top:733px;width:1537px;height:7px;background:#fff"></div>
<div class="abs" style="left:1px;top:733px;width:736px;height:7px;background:#c8c8c8;border-radius:4px"></div>
<div class="abs" style="left:1536px;top:0;width:9px;height:733px;background:#fff"></div>
<div class="vl" style="left:1536px;top:0;height:780px"></div>
<div class="abs" style="left:1537px;top:40px;width:7px;height:599px;background:#c8c8c8;border-radius:4px"></div>
<div class="abs" style="left:1537px;top:733px;width:8px;height:7px;background:#f0f0f0"></div>
</div>
<div class="abs" style="left:284px;top:862px;font-size:13px;line-height:18px;color:#606266">已选 0 条</div>
<div class="btn" style="left:354px;top:853px;width:55px;height:32px;line-height:30px;color:#c0c4cc;border-color:#ebeef5">删除</div>
<div class="abs" style="left:1120px;top:861px;font-size:13px;line-height:18px;color:#606266">共 245 条</div>
<div class="abs" style="left:1192px;top:855px;width:100px;height:28px;border:1px solid #dcdfe6;border-radius:4px;font-size:13px;color:#606266;line-height:28px"><span class="abs" style="left:17px;top:0">20条/页</span><svg class="abs" style="left:82px;top:11px" width="9" height="6" viewBox="0 0 9 6"><path d="M0.5 0.8 L4.5 4.8 L8.5 0.8" stroke="#c0c4cc" stroke-width="1" fill="none"/></svg></div>
<div class="pg" style="left:1312px"><svg style="margin-top:9px" width="6" height="9" viewBox="0 0 6 9"><path d="M5 0.6 L1.2 4.5 L5 8.4" stroke="#606266" stroke-width="1.3" fill="none"/></svg></div>
<div class="pg" style="left:1352px">1</div>
<div class="pg on" style="left:1392px">2</div>
<div class="pg" style="left:1432px">3</div>
<div class="pg" style="left:1472px">4</div>
<div class="pg" style="left:1512px">5</div>
<div class="pg" style="left:1552px">6</div>
<div class="pg" style="left:1592px"><svg style="margin-top:12px" width="12" height="4" viewBox="0 0 12 4"><circle cx="2" cy="2" r="1.4" fill="#606266"/><circle cx="6" cy="2" r="1.4" fill="#606266"/><circle cx="10" cy="2" r="1.4" fill="#606266"/></svg></div>
<div class="pg" style="left:1632px">13</div>
<div class="pg" style="left:1672px"><svg style="margin-top:9px" width="6" height="9" viewBox="0 0 6 9"><path d="M1 0.6 L4.8 4.5 L1 8.4" stroke="#606266" stroke-width="1.3" fill="none"/></svg></div>
<div class="abs" style="left:1731px;top:861px;font-size:13px;line-height:18px;color:#606266">前往</div>
<div class="abs" style="left:1761px;top:855px;width:46px;height:28px;border:1px solid #dcdfe6;border-radius:4px;font-size:13px;color:#606266;line-height:26px;text-align:center">2</div>
<div class="abs" style="left:1810px;top:860px;font-size:13px;line-height:18px;color:#606266">页</div>
</body></html>
